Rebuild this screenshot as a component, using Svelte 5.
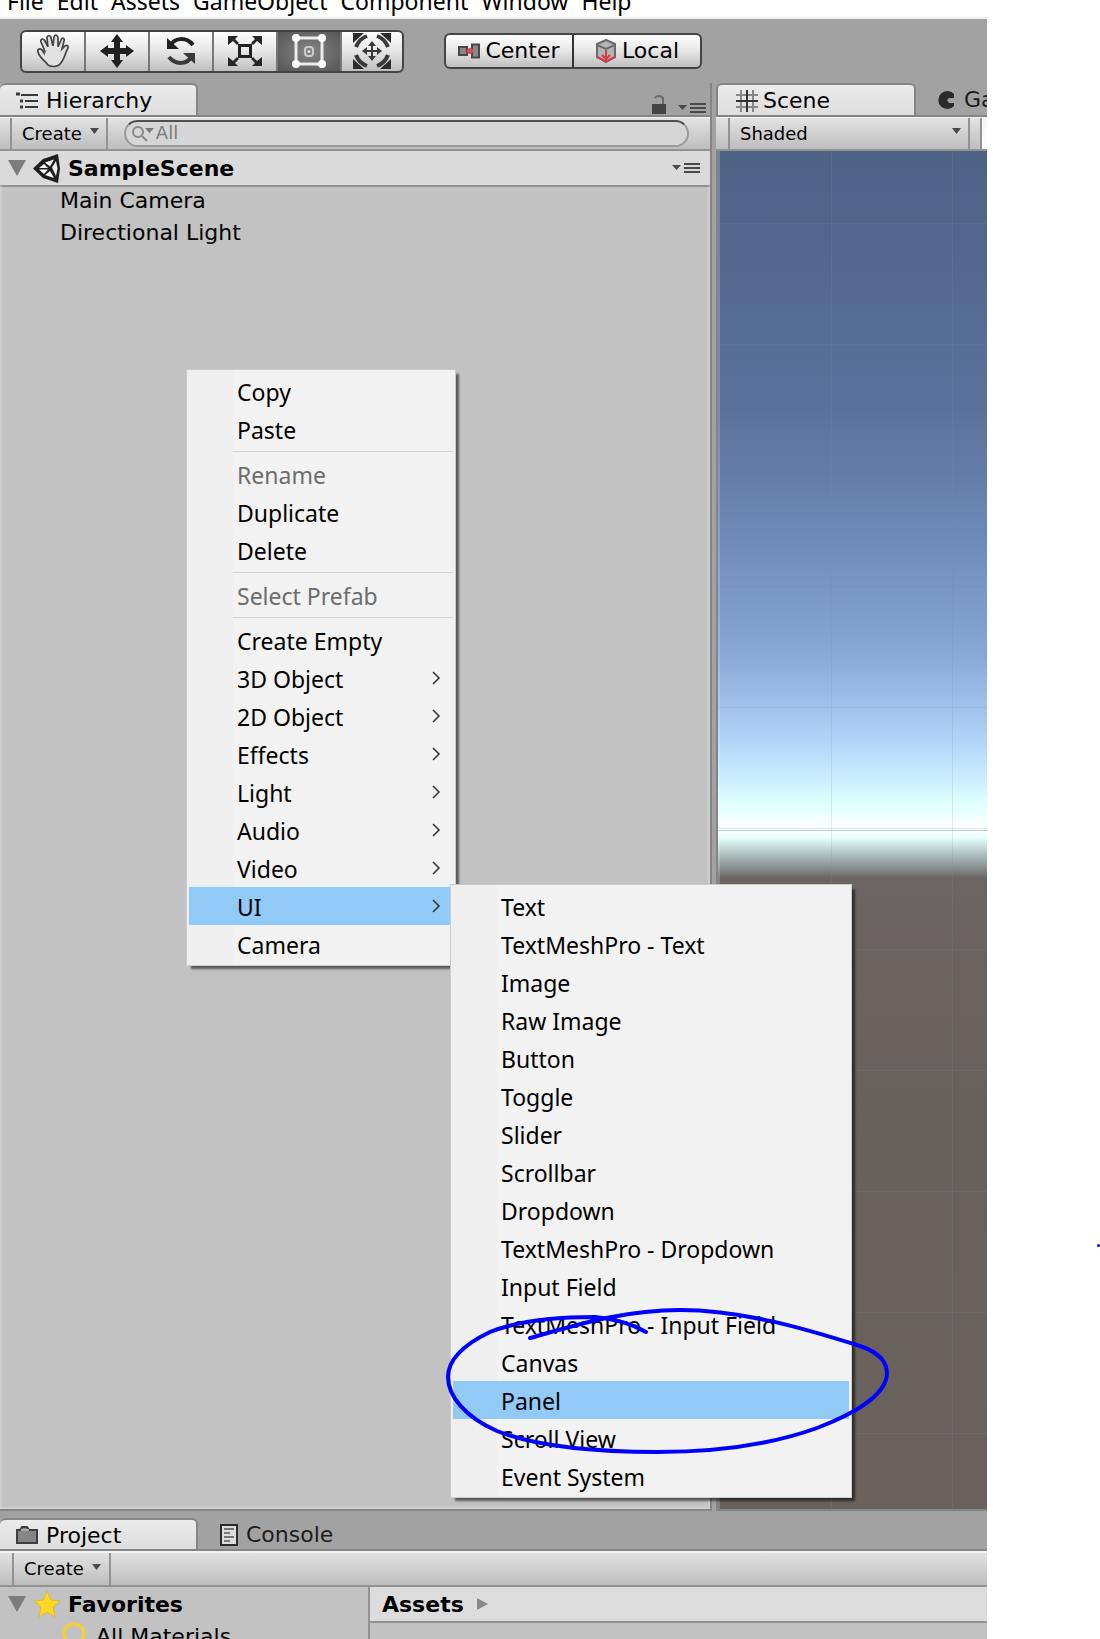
<script>
  const menuBar = ['File', 'Edit', 'Assets', 'GameObject', 'Component', 'Window', 'Help'];
  const tools = ['hand', 'move', 'rotate', 'scale', 'rect', 'transform'];
  let activeTool = $state('rect');
  let search = $state('');

  const contextMenu = [
    { label: 'Copy' },
    { label: 'Paste' },
    null,
    { label: 'Rename', disabled: true },
    { label: 'Duplicate' },
    { label: 'Delete' },
    null,
    { label: 'Select Prefab', disabled: true },
    null,
    { label: 'Create Empty' },
    { label: '3D Object', sub: true },
    { label: '2D Object', sub: true },
    { label: 'Effects', sub: true },
    { label: 'Light', sub: true },
    { label: 'Audio', sub: true },
    { label: 'Video', sub: true },
    { label: 'UI', sub: true, active: true },
    { label: 'Camera' }
  ];
  const uiMenu = [
    'Text', 'TextMeshPro - Text', 'Image', 'Raw Image', 'Button', 'Toggle', 'Slider', 'Scrollbar',
    'Dropdown', 'TextMeshPro - Dropdown', 'Input Field', 'TextMeshPro - Input Field', 'Canvas',
    'Panel', 'Scroll View', 'Event System'
  ].map((label) => ({ label, active: label === 'Panel' }));
</script>

{#snippet caret()}
  <svg class="caret" width="9" height="6" viewBox="0 0 9 6" aria-hidden="true"><path d="M0 0H9L4.500 6Z" fill="#4a4a4a" /></svg>
{/snippet}

{#snippet paneMenu()}
  <svg width="28" height="12" viewBox="0 0 28 12" aria-hidden="true">
    <path d="M0 3H9L4.500 8Z" fill="#4a4a4a" />
    <path d="M12 2H28M12 6H28M12 10H28" stroke="#4a4a4a" stroke-width="2" />
  </svg>
{/snippet}

{#snippet menuItems(items)}
  {#each items as item}
    {#if item}
      <li role="none">
        <button class="item" class:active={item.active} role="menuitem" disabled={item.disabled}>
          <span>{item.label}</span>
          {#if item.sub}
            <svg width="9" height="14" viewBox="0 0 9 14" aria-hidden="true"><path d="M1 1L7 7L1 13" fill="none" stroke="#333" stroke-width="1.500" /></svg>
          {/if}
        </button>
      </li>
    {:else}
      <li class="separator" role="separator"></li>
    {/if}
  {/each}
{/snippet}

<div class="page">
  <div class="editor">
    <nav class="menubar" aria-label="Main menu">
      {#each menuBar as entry}<button>{entry}</button>{/each}
    </nav>

    <header class="toolbar">
      <div class="tools">
        {#each tools as tool}
          <button class:on={activeTool === tool} aria-label={tool} onclick={() => (activeTool = tool)}>
            {#if tool === 'hand'}
              <svg width="34" height="34" viewBox="0 0 34 34">
                <path d="M12 31C9 27 3 23 2 18C1 15 4 14 6 16L8 19L8 15L5 8C4 5 7 4 9 7L12 13L11 4C11 1 15 1 15 4L17 12L18 3C19 0 22 1 22 4L22 13L25 6C26 3 29 4 28 7L26 15L29 12C32 10 33 13 31 16C29 20 28 27 23 31C20 33 15 33 12 31Z" fill="#e2e2e2" stroke="#444" stroke-width="1.700" />
                <path d="M9 19L10 16" stroke="#777" />
                <path d="M12 13L13 16M17 12V14M22 13L21 15" stroke="#e2e2e2" stroke-width="3" />
              </svg>
            {:else if tool === 'move'}
              <svg width="34" height="34" viewBox="0 0 34 34">
                <path d="M17 0L23 8H20V14H26V11L34 17L26 23V20H20V26H23L17 34L11 26H14V20H8V23L0 17L8 11V14H14V8H11Z" fill="#202020" />
              </svg>
            {:else if tool === 'rotate'}
              <svg width="30" height="30" viewBox="0 0 30 30">
                <path d="M4 10C8 2 20 0 27 9" fill="none" stroke="#202020" stroke-width="4" />
                <path d="M1 2V13H13Z" fill="#202020" />
                <path d="M26 20C22 28 10 30 3 21" fill="none" stroke="#3a3a3a" stroke-width="4" />
                <path d="M29 28V17H17Z" fill="#3a3a3a" />
              </svg>
            {:else if tool === 'scale'}
              <svg width="34" height="32" viewBox="0 0 34 32">
                <rect x="11.500" y="10.500" width="11" height="11" fill="none" stroke="#222" stroke-width="3" />
                <g fill="#262626">
                  <path d="M0 1H10L7 4L11 8L9 10L5 6L0 10Z" />
                  <path d="M34 1H24L27 4L23 8L25 10L29 6L34 10Z" />
                  <path d="M0 31H10L7 28L11 24L9 22L5 26L0 22Z" />
                  <path d="M34 31H24L27 28L23 24L25 22L29 26L34 22Z" />
                </g>
              </svg>
            {:else if tool === 'rect'}
              <svg width="36" height="36" viewBox="0 0 36 36">
                <rect x="5" y="5" width="26" height="26" fill="none" stroke="#ececec" stroke-width="3" />
                <g fill="#fff">
                  <circle cx="5" cy="5" r="4" /><circle cx="31" cy="5" r="4" /><circle cx="5" cy="31" r="4" /><circle cx="31" cy="31" r="4" />
                </g>
                <rect x="14" y="14" width="8" height="9" rx="3" fill="none" stroke="#ccc" stroke-width="2" />
                <circle cx="18" cy="18.500" r="1.500" fill="#ddd" />
              </svg>
            {:else}
              <svg width="38" height="36" viewBox="0 0 38 36">
                <g fill="#2b2b2b">
                  <path d="M0 0H11L0 10Z" /><path d="M38 0H27L38 10Z" /><path d="M0 36H11L0 26Z" /><path d="M38 36H27L38 26Z" />
                </g>
                <g fill="none" stroke="#3a3a3a" stroke-width="4">
                  <path d="M3 14Q6 6 14 3" /><path d="M24 3Q32 6 35 14" /><path d="M3 22Q6 30 14 33" /><path d="M24 33Q32 30 35 22" />
                </g>
                <path d="M19 11V25M12 18H26" stroke="#3c3c3c" stroke-width="2" />
                <path d="M19 8L23 13H15ZM19 28L23 23H15ZM9 18L14 14V22ZM29 18L24 14V22Z" fill="#3c3c3c" />
              </svg>
            {/if}
          </button>
        {/each}
      </div>

      <div class="pivot">
        <button>
          <svg width="22" height="16" viewBox="0 0 22 16" aria-hidden="true">
            <rect x="1" y="4" width="8" height="8" fill="#888" stroke="#484848" stroke-width="2" />
            <rect x="14" y="1.500" width="7" height="13" fill="#888" stroke="#484848" stroke-width="2" />
            <circle cx="12" cy="8" r="3" fill="#e04455" />
          </svg>
          Center
        </button>
        <button>
          <svg width="22" height="24" viewBox="0 0 22 24" aria-hidden="true">
            <path d="M11 1L20 5V18L11 23L2 18V5Z" fill="#b5b5b5" stroke="#6a6a6a" stroke-width="2" />
            <path d="M2 6L11 10L20 6" fill="none" stroke="#6a6a6a" stroke-width="2" />
            <path d="M11 11V21M7 16L11 20L15 16" fill="none" stroke="#d83a4c" stroke-width="2" />
            <path d="M2 18L11 22.500L20 18" fill="none" stroke="#d83a4c" stroke-width="2" />
          </svg>
          Local
        </button>
      </div>
    </header>

    <main class="docks">
      <section class="dock hierarchy" aria-label="Hierarchy">
        <div class="tabs">
          <button class="tab on">
            <svg width="22" height="18" viewBox="0 0 22 18" aria-hidden="true">
              <path d="M5 3H22M9 9H22M9 15H22" stroke="#3a3a3a" stroke-width="2" />
              <path d="M0 2H4M4 9H7M4 15H7" stroke="#3a3a3a" stroke-width="3" />
            </svg>
            Hierarchy
          </button>
          <div class="tab-actions">
            <button aria-label="Lock">
              <svg width="14" height="19" viewBox="0 0 14 19"><rect y="9" width="14" height="10" fill="#444" /><path d="M11 9V3Q9 1 7 1Q4 1 3 3" fill="none" stroke="#666" stroke-width="2" /></svg>
            </button>
            <button aria-label="Panel options">{@render paneMenu()}</button>
          </div>
        </div>
        <div class="strip">
          <button class="create">Create {@render caret()}</button>
          <label class="search">
            <svg width="22" height="18" viewBox="0 0 22 18" aria-hidden="true">
              <circle cx="6" cy="8" r="5" fill="none" stroke="#888" stroke-width="2" />
              <path d="M10 12L15 17" stroke="#888" stroke-width="2" />
              <path d="M13 4H22L17.500 9Z" fill="#777" />
            </svg>
            <input type="text" placeholder="All" aria-label="Search hierarchy" bind:value={search} />
          </label>
        </div>
        <div class="scene-row">
          <span class="fold"></span>
          <svg width="28" height="29" viewBox="0 0 28 29" aria-hidden="true">
            <path d="M0 14.500L10 5L25 0L27 14.500L25 29L10 24Z" fill="#1e1e1e" />
            <path d="M17 12.500L12 8.500L21 5.500Z" fill="#fff" />
            <path d="M6 14L11 10L15 14H6ZM6 15.500H15L11 20Z" fill="#fff" />
            <path d="M19 13.500L23 7L24.500 14.500L23 22Z" fill="#eee" />
            <path d="M17 17L21 24L12 21Z" fill="#fff" />
          </svg>
          <strong>SampleScene</strong>
          <button aria-label="Scene options">{@render paneMenu()}</button>
        </div>
        <ul class="objects">
          <li>Main Camera</li>
          <li>Directional Light</li>
        </ul>
      </section>

      <section class="dock scene" aria-label="Scene">
        <div class="tabs">
          <button class="tab on">
            <svg width="22" height="22" viewBox="0 0 22 22" aria-hidden="true">
              <path d="M5 0V22M17 0V22M0 5H22M0 17H22" stroke="#888" stroke-width="2" />
              <path d="M11 0V22M0 11H22" stroke="#333" stroke-width="2" />
            </svg>
            Scene
          </button>
          <button class="tab">
            <svg width="18" height="18" viewBox="0 0 18 18" aria-hidden="true"><path d="M16 3A9 9 0 1 0 16 15V12H11L9 9L11 7H16Z" fill="#2b2b2b" /></svg>
            Game
          </button>
        </div>
        <div class="strip">
          <button class="shading">Shaded {@render caret()}</button>
          <button class="mode" aria-label="2D mode"></button>
        </div>
        <div class="viewport"></div>
      </section>
    </main>

    <section class="project" aria-label="Project">
      <div class="tabs">
        <button class="tab on">
          <svg width="22" height="20" viewBox="0 0 22 20" aria-hidden="true">
            <path d="M1 17V4H4L6 1H11L13 4H21V17Z" fill="#858585" stroke="#3e3e3e" stroke-width="2" />
            <path d="M5 4H13" stroke="#aaa" stroke-width="2" />
          </svg>
          Project
        </button>
        <button class="tab">
          <svg width="18" height="22" viewBox="0 0 18 22" aria-hidden="true">
            <rect x="1" y="1" width="16" height="20" fill="#ddd" stroke="#2b2b2b" stroke-width="2" />
            <path d="M4 5H14M4 9H10M4 13H14M4 17H10" stroke="#777" stroke-width="2" />
          </svg>
          Console
        </button>
      </div>
      <div class="strip">
        <button class="create">Create {@render caret()}</button>
      </div>
      <div class="browser">
        <div class="tree">
          <div class="favorites">
            <span class="fold"></span>
            <svg width="28" height="28" viewBox="0 0 28 28" aria-hidden="true">
              <path d="M14 1L18 10L27 11L20 17L22 27L14 22L6 27L8 17L1 11L10 10Z" fill="#ffd91f" stroke="#d8b84a" />
            </svg>
            <strong>Favorites</strong>
          </div>
          <div class="favorite">
            <svg width="26" height="30" viewBox="0 0 26 30" aria-hidden="true">
              <circle cx="13" cy="12" r="10" fill="none" stroke="#f9cf2a" stroke-width="3" />
              <path d="M19 20L25 28" stroke="#f9cf2a" stroke-width="4" />
            </svg>
            All Materials
          </div>
        </div>
        <div class="files">
          <div class="crumbs">
            <strong>Assets</strong>
            <svg width="11" height="12" viewBox="0 0 11 12" aria-hidden="true"><path d="M0 0L11 6L0 12Z" fill="#888" /></svg>
          </div>
        </div>
      </div>
    </section>
  </div>

  <ul class="menu context" role="menu">{@render menuItems(contextMenu)}</ul>
  <ul class="menu submenu" role="menu">{@render menuItems(uiMenu)}</ul>

  <svg class="ink" width="450" height="156" viewBox="444 1301 450 156" aria-hidden="true">
    <path d="M530 1338C580 1324 625 1310 680 1310C740 1310 800 1327 860 1346C880 1353 887 1362 887 1374C886 1392 862 1411 817 1428C770 1445 715 1452 657 1452C600 1452 540 1448 497 1431C465 1417 448 1396 448 1377C448 1358 465 1344 490 1332C520 1320 560 1317 595 1317C617 1319 634 1325 646 1332" />
  </svg>
  <span class="ink-dot"></span>
</div>

<style>
  :global(body) {
    margin: 0;
    background: #fff;
  }
  .page {
    position: relative;
    box-sizing: border-box;
    height: 100vh;
    min-height: 1639px;
    padding-right: 113px;
    overflow: hidden;
    font: 22px/32px 'DejaVu Sans', Verdana, sans-serif;
    color: #000;
  }
  button {
    margin: 0;
    padding: 0;
    border: 0;
    background: none;
    font: inherit;
    color: inherit;
    display: flex;
    align-items: center;
  }
  ul {
    margin: 0;
    padding: 0;
    list-style: none;
  }
  .editor {
    display: flex;
    flex-direction: column;
    height: 100%;
    overflow: hidden;
    background: #a2a2a2;
  }

  .menubar {
    box-sizing: border-box;
    height: 19px;
    display: flex;
    align-items: flex-end;
    gap: 13px;
    padding-left: 7px;
    border-bottom: 2px solid #f0f0f0;
    background: #fff;
    font: 23px/32px 'Noto Sans', 'Segoe UI', sans-serif;
    overflow: hidden;
  }

  .toolbar {
    display: flex;
    align-items: center;
    gap: 40px;
    height: 64px;
    padding-left: 20px;
  }
  .tools,
  .pivot {
    display: flex;
    border: 2px solid #444;
    border-radius: 6px;
    overflow: hidden;
    background: linear-gradient(#fdfdfd, #e6e6e6 50%, #c0bfc0);
  }
  .tools button {
    width: 64px;
    height: 39px;
    box-sizing: border-box;
    justify-content: center;
    border-right: 2px solid #777;
  }
  .tools button:last-child {
    width: 60px;
    border-right: 0;
  }
  .tools .on {
    background: radial-gradient(#858585, #555);
  }
  .pivot button {
    width: 126px;
    height: 32px;
    box-sizing: border-box;
    justify-content: center;
    gap: 5px;
  }
  .pivot button:first-child {
    width: 128px;
    border-right: 2px solid #333;
  }

  .docks {
    flex: 1;
    display: grid;
    grid-template-columns: 712fr 271fr;
    gap: 4px;
    min-height: 0;
  }
  .dock {
    display: flex;
    flex-direction: column;
    min-width: 0;
    overflow: hidden;
  }
  .tabs {
    display: flex;
    align-items: stretch;
    height: 34px;
    border-bottom: 2px solid #858585;
    box-sizing: border-box;
  }
  .tab {
    width: 198px;
    box-sizing: border-box;
    flex-shrink: 0;
    gap: 8px;
    padding-top: 2px;
    padding-left: 22px;
    color: #1c1c1c;
  }
  .tab.on {
    padding-left: 16px;
    border: 2px solid #858585;
    border-width: 2px 2px 0 0;
    border-radius: 6px 6px 0 0;
    background: linear-gradient(#ebebeb, #dedede);
    color: #000;
  }
  .scene .tab.on {
    width: 200px;
    padding-left: 18px;
    gap: 5px;
    border-left-width: 2px;
  }
  .tab-actions {
    display: flex;
    flex: 1;
    justify-content: flex-end;
    align-items: flex-end;
    gap: 12px;
    padding: 0 6px 1px 0;
  }
  .strip {
    display: flex;
    height: 34px;
    box-sizing: border-box;
    border-bottom: 2px solid #929292;
    border-top: 1px solid #f2f2f2;
    background: linear-gradient(#e2e2e2, #bebebe);
    font-size: 18px;
  }
  .create {
    margin-left: 10px;
    padding: 0 7px 0 10px;
    gap: 8px;
    border: solid #929292;
    border-width: 0 2px;
  }
  .caret {
    margin-bottom: 5px;
  }
  .search {
    flex: 1;
    display: flex;
    align-items: center;
    gap: 2px;
    box-sizing: border-box;
    height: 27px;
    margin: 2px 21px 0 16px;
    padding: 0 12px 1px 6px;
    border: 2px solid #999;
    border-top-color: #505050;
    border-radius: 14px;
    background: #d6d6d6;
  }
  .search input {
    flex: 1;
    min-width: 0;
    padding: 0;
    border: 0;
    outline: 0;
    background: none;
    font: inherit;
    color: #333;
  }
  .search input::placeholder {
    color: #7a7a7a;
    opacity: 1;
  }

  .hierarchy {
    border: solid #858585;
    border-width: 0 2px 2px 0;
    background: linear-gradient(#a2a2a2 34px, #c2c2c2 34px);
  }
  .hierarchy .tabs {
    margin-right: -2px;
    background: #a2a2a2;
  }
  .scene-row {
    display: flex;
    align-items: center;
    height: 34px;
    padding: 0 10px 0 8px;
    border-bottom: 2px solid #929292;
    background: #dadada;
  }
  strong {
    padding-top: 2px;
  }
  .scene-row strong {
    flex: 1;
  }
  .scene-row svg,
  .favorites svg {
    margin-right: 7px;
  }
  .scene-row button svg {
    margin: 0;
  }
  .fold {
    width: 0;
    margin-right: 7px;
    border: solid transparent;
    border-width: 16px 9px 0;
    border-top-color: #7c7c7c;
  }
  .objects {
    flex: 1;
    padding-left: 60px;
    margin-top: -2px;
    box-shadow: inset 2px 0 #fff3, inset -2px -2px #fff3;
  }

  .strip .shading {
    flex: 0 0 242px;
    box-sizing: border-box;
    justify-content: space-between;
    margin-left: 12px;
    padding: 0 7px 0 10px;
    border: solid #929292;
    border-width: 0 2px;
  }
  .mode {
    flex: 1;
    margin-left: 10px;
    border-left: 2px solid #929292;
    background: linear-gradient(#f4f4f4, #fff);
  }
  .viewport {
    flex: 1;
    border: 2px solid #858585;
    border-width: 0 0 2px 2px;
    box-shadow: inset 2px 0 #fff3;
    background:
      linear-gradient(90deg, transparent 113px, #8883 113px 114px, transparent 114px 234px, #8883 234px 235px, transparent 235px),
      linear-gradient(transparent 679px, #9aa8 679px 680px, transparent 680px),
      repeating-linear-gradient(transparent 0 72px, #7883 72px 73px, transparent 73px 121px),
      linear-gradient(#4e6286 0, #53688f 110px, #576f97 203px, #5b739c 260px, #627aa5 309px, #6883ae 350px, #6e8ab8 391px, #7693c2 423px, #809ecb 468px, #8baad8 509px, #9dbce7 546px, #abcef3 579px, #bfe2fe 611px, #d0f2ff 635px, #dcffff 650px, #fff 679px, #e4ffff 687px, #b4c4c4 702px, #8a9292 716px, #6b6664 727px, #6a625d 820px, #67615b 950px, #6a615c 1358px);
  }

  .project {
    height: 128px;
    box-sizing: border-box;
    padding-top: 7px;
    overflow: hidden;
  }
  .project .tabs {
    height: 33px;
  }
  .project .strip {
    height: 36px;
    border-top-width: 2px;
  }
  .project .create {
    margin-left: 12px;
    padding-right: 8px;
  }
  .browser {
    display: grid;
    grid-template-columns: 370fr 617fr;
    height: 64px;
    background: #c2c2c2;
  }
  .tree {
    border-right: 2px solid #929292;
  }
  .favorites {
    display: flex;
    align-items: center;
    height: 34px;
    padding-left: 8px;
  }
  .favorite {
    display: flex;
    align-items: center;
    gap: 9px;
    padding-left: 61px;
  }
  .crumbs {
    display: flex;
    align-items: center;
    gap: 13px;
    height: 34px;
    padding-left: 12px;
    border-bottom: 2px solid #929292;
    background: #dcdcdc;
  }

  .menu {
    position: absolute;
    box-sizing: border-box;
    padding: 2px;
    border: 1px solid #ccc;
    background: linear-gradient(90deg, #efefef 46px, #f2f2f2 46px);
    box-shadow: 4px 4px 2px -1px #0008;
    font: 23px/36px 'Noto Sans', 'Segoe UI', sans-serif;
  }
  .context {
    left: 186px;
    top: 369px;
    width: 270px;
  }
  .submenu {
    left: 450px;
    top: 884px;
    width: 402px;
  }
  .item {
    box-sizing: border-box;
    width: 100%;
    height: 38px;
    padding: 0 12px 0 48px;
    justify-content: space-between;
    white-space: nowrap;
  }
  .item span {
    padding-top: 2px;
  }
  .item:disabled {
    color: #6d6d6d;
  }
  .item.active {
    background: #91c9f7;
  }
  .separator {
    height: 7px;
    margin-left: 44px;
    background: linear-gradient(transparent 3px, #d4d4d4 3px 4px, transparent 4px);
  }

  .ink {
    position: absolute;
    left: 444px;
    top: 1301px;
    fill: none;
    stroke: #00f;
    stroke-width: 4;
    stroke-linecap: round;
    stroke-linejoin: round;
  }
  .ink-dot {
    position: absolute;
    right: 0;
    top: 1244px;
    width: 3px;
    height: 3px;
    border-radius: 2px;
    background: #00f;
  }
</style>
